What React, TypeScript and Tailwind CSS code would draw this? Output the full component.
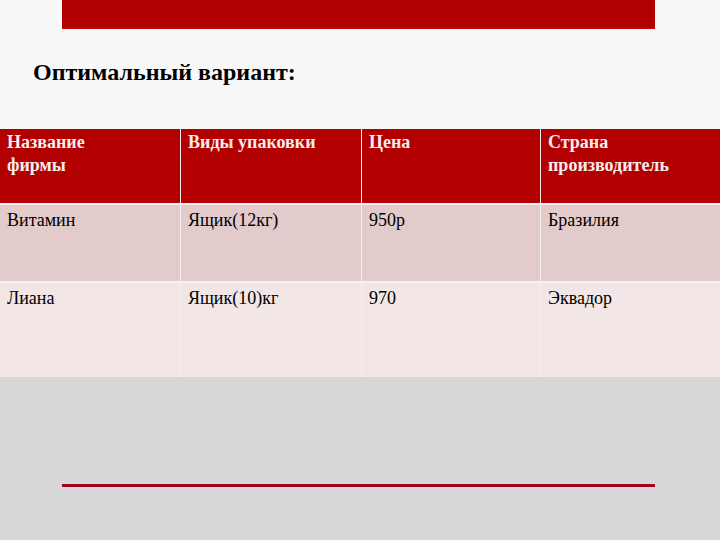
const header = [['Название', 'фирмы'], ['Виды упаковки'], ['Цена'], ['Страна', 'производитель']]

const rows = [
  { cells: ['Витамин', 'Ящик(12кг)', '950р', 'Бразилия'], bg: 'bg-[#e3cbcc]', h: 'h-[76px]' },
  { cells: ['Лиана', 'Ящик(10)кг', '970', 'Эквадор'], bg: 'bg-[#f2e6e6]', h: 'h-[94px]' },
]

export default function App() {
  return (
    <div className="w-[720px] h-[540px] flex flex-col bg-[#d7d7d7] font-['Liberation_Serif',serif] overflow-hidden">
      <div className="h-[129px] bg-[#f8f8f8] flex flex-col">
        <div className="ml-[62px] w-[593px] h-[29px] bg-[#b00000] border-b-2 border-[#c00000]" />
        <h1 className="ml-[33px] mt-[31px] text-[24px] leading-[25px] font-bold text-black">
          Оптимальный вариант:
        </h1>
      </div>

      <div className="grid grid-cols-[180px_180px_178px_179px] gap-x-px gap-y-[2px] bg-[#f6f0f0]">
        {header.map((lines) => (
          <div key={lines[0]} className="h-[74px] bg-[#b20000] px-[7px] pt-[2px] text-[18px] leading-[23px] font-bold text-[#f8eded]">
            {lines.map((word) => (
              <div key={word}>{word}</div>
            ))}
          </div>
        ))}
        {rows.map((row) =>
          row.cells.map((text, i) => (
            <div key={row.cells[0] + i} className={`${row.bg} ${row.h} px-[7px] pt-[4px] text-[18px] leading-[23px] text-black`}>
              {text}
            </div>
          ))
        )}
      </div>

      <div className="flex-1 bg-[#d7d7d7]">
        <div className="ml-[62px] mt-[107px] w-[593px] h-[3px] bg-[#a3001e]" />
      </div>
    </div>
  )
}
